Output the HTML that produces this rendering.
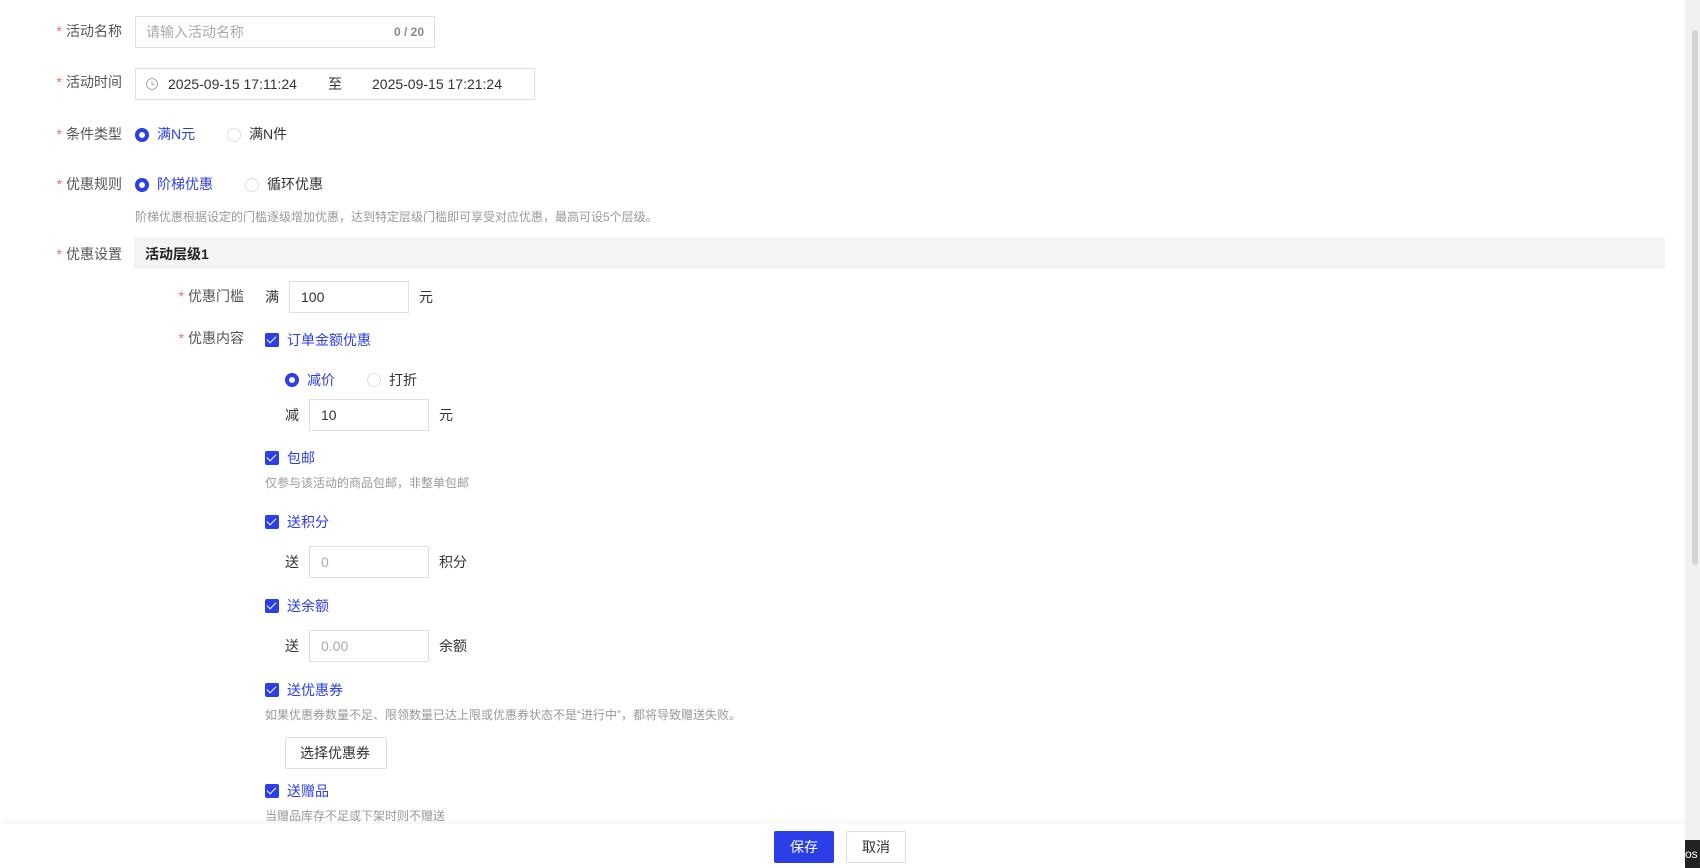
<!DOCTYPE html>
<html><head><meta charset="utf-8"><style>
*{box-sizing:border-box;margin:0;padding:0}
body{width:1700px;height:868px;overflow:hidden;background:#fff;font-family:"Liberation Sans","Noto Sans CJK SC",sans-serif;font-size:14px;color:#333;position:relative}
.a{position:absolute;white-space:nowrap;line-height:20px}
.lab{text-align:right;width:100px;color:#555}
.lab b{color:#f56c6c;font-weight:normal;margin-right:4px}
.inp{position:absolute;border:1px solid #dcdfe6;background:#fff;height:32px}
.blue{color:#2b3ee8}
.gray{color:#999;font-size:12px}
.rad{position:absolute;width:14px;height:14px;border-radius:50%;border:1px solid #dcdfe6;background:#fff}
.rad.on{border:4px solid #2b3ee8}
.cb{position:absolute;width:14px;height:14px;border-radius:2px;background:#2b3ee8}
.cb:after{content:"";position:absolute;left:4px;top:1px;width:4px;height:8px;border:solid #fff;border-width:0 1.5px 1.5px 0;transform:rotate(45deg)}
</style></head><body>
<div class="a lab" style="left:22px;top:21px"><b>*</b>活动名称</div>
<div class="inp" style="left:135px;top:16px;width:300px"></div>
<div class="a" style="left:146px;top:22px;color:#aaa">请输入活动名称</div>
<div class="a" style="left:394px;top:22px;color:#888;font-size:12px;font-weight:bold">0 / 20</div>

<div class="a lab" style="left:22px;top:72px"><b>*</b>活动时间</div>
<div class="inp" style="left:135px;top:68px;width:400px"></div>
<svg class="a" style="left:145px;top:77px" width="14" height="14" viewBox="0 0 14 14"><circle cx="7" cy="7" r="5.5" fill="none" stroke="#aaa"/><path d="M7 4v3.5h2.5" fill="none" stroke="#aaa"/></svg>
<div class="a" style="left:168px;top:74px">2025-09-15 17:11:24</div>
<div class="a" style="left:328px;top:74px">至</div>
<div class="a" style="left:372px;top:74px">2025-09-15 17:21:24</div>

<div class="a lab" style="left:22px;top:124px"><b>*</b>条件类型</div>
<div class="rad on" style="left:135px;top:128px"></div><div class="a blue" style="left:157px;top:124px">满N元</div>
<div class="rad" style="left:227px;top:128px"></div><div class="a" style="left:249px;top:124px">满N件</div>

<div class="a lab" style="left:22px;top:174px"><b>*</b>优惠规则</div>
<div class="rad on" style="left:135px;top:178px"></div><div class="a blue" style="left:157px;top:174px">阶梯优惠</div>
<div class="rad" style="left:245px;top:178px"></div><div class="a" style="left:267px;top:174px">循环优惠</div>
<div class="a gray" style="left:135px;top:207px">阶梯优惠根据设定的门槛逐级增加优惠，达到特定层级门槛即可享受对应优惠，最高可设5个层级。</div>

<div class="a lab" style="left:22px;top:244px"><b>*</b>优惠设置</div>
<div style="position:absolute;left:134px;top:237px;width:1531px;height:32px;background:#f4f4f4"></div>
<div class="a" style="left:145px;top:244px;font-weight:bold;color:#222">活动层级1</div>

<div class="a lab" style="left:144px;top:286px"><b>*</b>优惠门槛</div>
<div class="a" style="left:265px;top:287px">满</div>
<div class="inp" style="left:289px;top:281px;width:120px"></div>
<div class="a" style="left:301px;top:287px">100</div>
<div class="a" style="left:419px;top:287px">元</div>

<div class="a lab" style="left:144px;top:328px"><b>*</b>优惠内容</div>
<div class="cb" style="left:265px;top:333px"></div><div class="a blue" style="left:287px;top:330px">订单金额优惠</div>
<div class="rad on" style="left:285px;top:373px"></div><div class="a blue" style="left:307px;top:370px">减价</div>
<div class="rad" style="left:367px;top:373px"></div><div class="a" style="left:389px;top:370px">打折</div>
<div class="a" style="left:285px;top:405px">减</div>
<div class="inp" style="left:309px;top:399px;width:120px"></div>
<div class="a" style="left:321px;top:405px">10</div>
<div class="a" style="left:439px;top:405px">元</div>

<div class="cb" style="left:265px;top:451px"></div><div class="a blue" style="left:287px;top:448px">包邮</div>
<div class="a gray" style="left:265px;top:473px">仅参与该活动的商品包邮，非整单包邮</div>

<div class="cb" style="left:265px;top:515px"></div><div class="a blue" style="left:287px;top:512px">送积分</div>
<div class="a" style="left:285px;top:552px">送</div>
<div class="inp" style="left:309px;top:546px;width:120px"></div>
<div class="a" style="left:321px;top:552px;color:#aaa">0</div>
<div class="a" style="left:439px;top:552px">积分</div>

<div class="cb" style="left:265px;top:599px"></div><div class="a blue" style="left:287px;top:596px">送余额</div>
<div class="a" style="left:285px;top:636px">送</div>
<div class="inp" style="left:309px;top:630px;width:120px"></div>
<div class="a" style="left:321px;top:636px;color:#aaa">0.00</div>
<div class="a" style="left:439px;top:636px">余额</div>

<div class="cb" style="left:265px;top:683px"></div><div class="a blue" style="left:287px;top:680px">送优惠券</div>
<div class="a gray" style="left:265px;top:705px">如果优惠券数量不足、限领数量已达上限或优惠券状态不是“进行中”，都将导致赠送失败。</div>
<div class="inp" style="left:285px;top:737px;width:102px;height:32px;border-radius:2px"></div>
<div class="a" style="left:300px;top:743px">选择优惠券</div>

<div class="cb" style="left:265px;top:784px"></div><div class="a blue" style="left:287px;top:781px">送赠品</div>
<div class="a gray" style="left:265px;top:806px">当赠品库存不足或下架时则不赠送</div>

<div style="position:absolute;left:0;top:824px;width:1685px;height:44px;background:#fff;box-shadow:0 -3px 6px rgba(0,0,0,.04)"></div>
<div class="a" style="left:774px;top:831px;width:60px;height:32px;background:#2b3ee8;color:#fff;text-align:center;line-height:32px;border-radius:2px">保存</div>
<div class="a" style="left:846px;top:831px;width:60px;height:32px;border:1px solid #dcdfe6;text-align:center;line-height:30px;border-radius:2px">取消</div>

<div style="position:absolute;left:1685px;top:0;width:15px;height:840px;background:#f1f1f3"></div>
<div style="position:absolute;left:1692px;top:30px;width:6px;height:535px;background:#d4d4d6;border-radius:3px"></div>
<div style="position:absolute;left:1685px;top:840px;width:15px;height:28px;background:#222;color:#fff;font-size:12px;line-height:28px;overflow:hidden">os</div>
</body></html>
